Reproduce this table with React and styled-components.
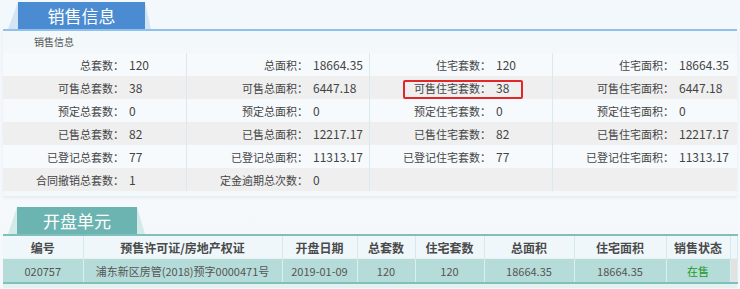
import React from "react";
import styled, { createGlobalStyle } from "styled-components";

const GlobalStyle = createGlobalStyle`
  html, body {
    margin: 0;
    background: linear-gradient(180deg, #f3f8fc 0%, #f6f9fc 60%, #f4f8fb 100%);
  }
  body {
    font-family: "Noto Sans CJK SC", "Liberation Sans", sans-serif;
    color: #333;
  }
`;

const Page = styled.div`
  width: 734px;
  padding: 2px 3px 0;
`;

const TabBar = styled.div`
  display: flex;
  align-items: flex-end;
  height: 27px;
  padding-left: 5px;
`;

const Wedge = styled.div`
  padding: 0 ${props => props.$right}px 0 ${props => props.$left}px;
  background: ${props => props.$wedge};
  clip-path: polygon(
    ${props => props.$left}px 0,
    calc(100% - ${props => props.$right}px) 0,
    100% 100%,
    0 100%
  );
`;

const Tab = styled.div`
  width: ${props => props.$width}px;
  height: 27px;
  line-height: 27px;
  background: ${props => props.$color};
  color: #fff;
  font-size: 17px;
  text-align: center;
`;

const Panel = styled.div`
  border-top: 2px solid #8fc1ea;
  background: #f3f8fb;
  box-shadow: 0 2px 3px rgba(120, 140, 160, 0.12);
  padding-bottom: 5px;
`;

const Caption = styled.div`
  height: 22px;
  line-height: 22px;
  padding-left: 31px;
  font-size: 10px;
  color: #555;
`;

const InfoRow = styled.div`
  display: grid;
  grid-template-columns: 184px 183px 183px 184px;
  height: 23px;
  background: ${props => (props.$alt ? "#efefef" : "#f7fafc")};
`;

const Cell = styled.div`
  position: relative;
  display: flex;
  align-items: center;
  border-right: 1px solid #dbe8f2;

  &:last-child {
    border-right: none;
  }

  ${props =>
    props.$mark &&
    `
    &::after {
      content: "";
      position: absolute;
      left: 33px;
      top: 4px;
      width: 116px;
      height: 15px;
      border: 2px solid #e3262a;
      border-radius: 2px;
    }
  `}
`;

const Label = styled.span`
  width: 121px;
  text-align: right;
  font-size: 11px;
  color: #444;
  white-space: nowrap;
`;

const Value = styled.span`
  padding-left: 5px;
  font-size: 12px;
  color: #444;
`;

const Gap = styled.div`
  height: 11px;
`;

const Table = styled.table`
  width: 734px;
  border-collapse: collapse;
  table-layout: fixed;
  border-top: 2px solid #7fc0bd;
  border-bottom: 2px solid #7fc0bd;
`;

const Th = styled.th`
  height: 22px;
  padding: 0;
  background: #eff7fb;
  border-right: 1px solid #d6e9f1;
  font-size: 12px;
  font-weight: 700;
  color: #4a4a4a;
  text-align: center;
`;

const Td = styled.td`
  height: 23px;
  padding: 0;
  background: ${props => (props.$bar ? "#e2e2e2" : "#b5dcd9")};
  border-right: 1px solid #d9efed;
  border-top: 1px solid #e4f2f1;
  font-size: 11px;
  color: ${props => (props.$green ? "#1f9a22" : "#555")};
  text-align: center;
  white-space: nowrap;
`;

const Bottom = styled.div`
  height: 4px;
  background: #e3f1f0;
`;

const rows = [
  [["总套数", "120"], ["总面积", "18664.35"], ["住宅套数", "120"], ["住宅面积", "18664.35"]],
  [["可售总套数", "38"], ["可售总面积", "6447.18"], ["可售住宅套数", "38", true], ["可售住宅面积", "6447.18"]],
  [["预定总套数", "0"], ["预定总面积", "0"], ["预定住宅套数", "0"], ["预定住宅面积", "0"]],
  [["已售总套数", "82"], ["已售总面积", "12217.17"], ["已售住宅套数", "82"], ["已售住宅面积", "12217.17"]],
  [["已登记总套数", "77"], ["已登记总面积", "11313.17"], ["已登记住宅套数", "77"], ["已登记住宅面积", "11313.17"]],
  [["合同撤销总套数", "1"], ["定金逾期总次数", "0"], null, null]
];

const columns = [
  ["编号", 80],
  ["预售许可证/房地产权证", 199],
  ["开盘日期", 75],
  ["总套数", 58],
  ["住宅套数", 69],
  ["总面积", 90],
  ["住宅面积", 92],
  ["销售状态", 64]
];

const unit = ["020757", "浦东新区房管(2018)预字0000471号", "2019-01-09", "120", "120", "18664.35", "18664.35"];

function App() {
  return (
    <Page>
      <GlobalStyle />
      <TabBar>
        <Wedge $left={10} $right={6} $wedge="#d3e5f4">
          <Tab $width={127} $color="#4a8bd1">销售信息</Tab>
        </Wedge>
      </TabBar>
      <Panel>
        <Caption>销售信息</Caption>
        {rows.map((row, i) => (
          <InfoRow key={i} $alt={i % 2 === 1}>
            {row.map((cell, j) => (
              <Cell key={j} $mark={cell && cell[2]}>
                {cell && (
                  <>
                    <Label>{cell[0]}：</Label>
                    <Value>{cell[1]}</Value>
                  </>
                )}
              </Cell>
            ))}
          </InfoRow>
        ))}
      </Panel>
      <Gap />
      <TabBar>
        <Wedge $left={9} $right={8} $wedge="#d2eae8">
          <Tab $width={120} $color="#6cb4b2">开盘单元</Tab>
        </Wedge>
      </TabBar>
      <Table>
        <colgroup>
          {columns.map(([name, w]) => (
            <col key={name} style={{ width: w }} />
          ))}
          <col style={{ width: 7 }} />
        </colgroup>
        <thead>
          <tr>
            {columns.map(([name]) => (
              <Th key={name}>{name}</Th>
            ))}
            <Th />
          </tr>
        </thead>
        <tbody>
          <tr>
            {unit.map((v, i) => (
              <Td key={i}>{v}</Td>
            ))}
            <Td $green>在售</Td>
            <Td $bar />
          </tr>
        </tbody>
      </Table>
      <Bottom />
    </Page>
  );
}

export default App;
